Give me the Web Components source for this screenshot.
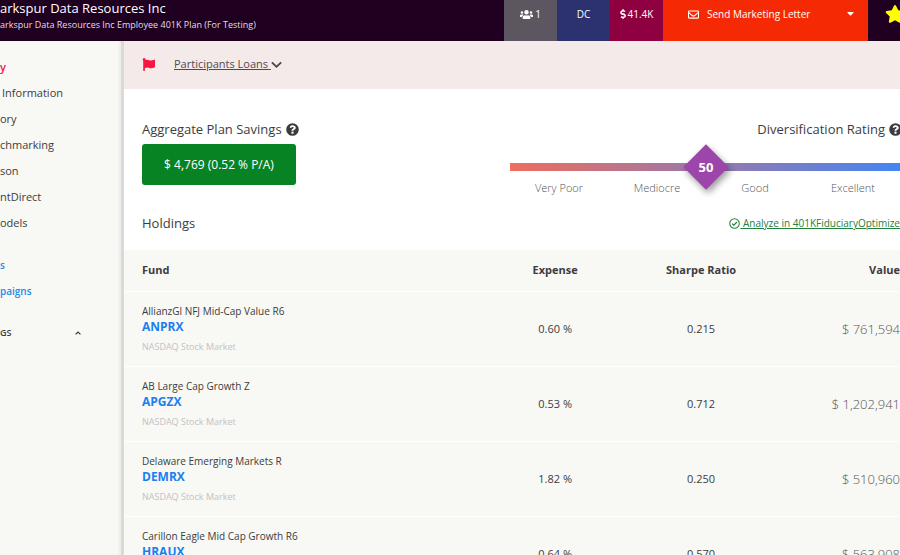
<!DOCTYPE html>
<html lang="en">
<head>
<meta charset="utf-8">
<title>401K Plan Holdings</title>
<style>
html, body { margin: 0; height: 100%; }
body { font-family: "Open Sans", "Noto Sans", sans-serif; font-size: 11px; line-height: 16px; color: #3c3c40; background: #fff; overflow: hidden; }
</style>
</head>
<body>
<plan-app>
  <plan-header slot="header" heading="arkspur Data Resources Inc" subheading="arkspur Data Resources Inc Employee 401K Plan (For Testing)">
    <header-tile tone="people" icon="users">1</header-tile>
    <header-tile tone="type">DC</header-tile>
    <header-tile tone="assets" icon="dollar">41.4K</header-tile>
    <letter-button>Send Marketing Letter</letter-button>
    <favorite-button></favorite-button>
  </plan-header>
  <side-nav slot="nav"></side-nav>
  <plan-alert>Participants Loans</plan-alert>
  <plan-summary>
    <savings-box slot="savings">$ 4,769 (0.52 % P/A)</savings-box>
    <rating-scale slot="rating" value="50"></rating-scale>
  </plan-summary>
  <holdings-bar></holdings-bar>
  <holdings-table></holdings-table>
</plan-app>
<script>
const ICONS = {
  users: ['0 0 640 512', '<path d="M96 224a64 64 0 1 0 0-128 64 64 0 0 0 0 128zm448 0a64 64 0 1 0 0-128 64 64 0 0 0 0 128zm32 32h-64c-18 0-34 7-45 19 40 22 69 62 75 109h66c18 0 32-14 32-32v-32c0-35-29-64-64-64zm-256 0a112 112 0 1 0 0-224 112 112 0 0 0 0 224zm77 32h-8c-42 20-96 20-138 0h-8c-64 0-115 52-115 115v29c0 27 21 48 48 48h288c27 0 48-21 48-48v-29c0-63-51-115-115-115zm-224-13c-11-12-27-19-45-19H64c-35 0-64 29-64 64v32c0 18 14 32 32 32h66c6-47 35-87 75-109z"/>'],
  dollar: ['0 0 288 512', '<path d="M209 233l-108-31c-13-4-21-15-21-28 0-16 13-30 29-30h67c12 0 24 4 34 11 6 4 14 4 20-2l35-34c7-7 6-19-2-25-24-19-54-30-85-30V16c0-9-7-16-16-16h-32c-9 0-16 7-16 16v48h-2C49 64-7 124 1 193c6 49 43 89 91 103l102 30c13 4 21 15 21 28 0 16-13 30-29 30h-67c-12 0-24-4-34-11-6-4-14-4-20 2l-35 34c-7 7-6 19 2 25 24 19 54 30 85 30v32c0 9 7 16 16 16h32c9 0 16-7 16-16v-32c47-1 90-29 105-74 22-62-15-139-77-157z"/>'],
  mail: ['0 0 512 512', '<path fill-rule="evenodd" d="M48 64h416a48 48 0 0 1 48 48v288a48 48 0 0 1-48 48H48a48 48 0 0 1-48-48V112a48 48 0 0 1 48-48zm0 48v41c23 18 58 47 135 107 17 13 51 46 73 45 22 1 56-32 73-45 77-60 112-89 135-107v-41H48zm0 288h416V214c-23 18-56 44-105 83-22 17-60 56-103 55-43 1-82-38-103-55-49-39-82-65-105-83v186z"/>'],
  caretDown: ['0 0 320 192', '<path d="M31 0h258c18 0 27 21 14 34L177 163a24 24 0 0 1-34 0L17 34C4 21 13 0 31 0z"/>'],
  caretUp: ['0 0 320 192', '<path d="M30 170L160 45l130 125" fill="none" stroke="currentColor" stroke-width="70"/>'],
  star: ['0 0 576 512', '<path d="M259 18l-65 132-146 21c-26 4-36 36-17 55l105 103-25 145c-4 26 24 46 47 34l130-69 130 69c23 12 51-8 47-34l-25-145 105-103c19-19 9-51-17-55l-146-21-65-132c-12-24-46-24-58 0z"/>'],
  flag: ['0 0 512 512', '<path d="M350 99c-49 0-89-32-151-32-23 0-43 4-62 11A56 56 0 1 0 48 101v387c0 13 11 24 24 24h16c13 0 24-11 24-24v-94c28-12 64-22 114-22 49 0 89 32 151 32 48 0 86-16 121-40 9-6 14-16 14-27V96c0-23-24-39-46-29-34 16-77 32-116 32z"/>'],
  chevron: ['0 0 448 280', '<path d="M34 52l190 180L414 52" fill="none" stroke="currentColor" stroke-width="76"/>'],
  help: ['0 0 512 512', '<path fill-rule="evenodd" d="M504 256a248 248 0 1 1-496 0 248 248 0 0 1 496 0zM262 90c-54 0-89 23-116 64-4 5-2 12 2 16l35 26c5 4 13 3 17-2 18-23 30-36 57-36 20 0 45 13 45 33 0 15-12 22-32 33-24 14-55 30-55 72v12h84v-8c0-29 86-30 86-109 0-59-61-101-123-101zm-6 246a46 46 0 1 0 0 92 46 46 0 0 0 0-92z"/>'],
  check: ['0 0 512 512', '<circle cx="256" cy="256" r="222" fill="none" stroke="currentColor" stroke-width="48"/><path d="M145 260l76 78 150-152" fill="none" stroke="currentColor" stroke-width="52"/>']
};
const icon = (name, w, h) => `<svg aria-hidden="true" width="${w}" height="${h}" viewBox="${ICONS[name][0]}" fill="currentColor">${ICONS[name][1]}</svg>`;
const BASE = '*,:host{box-sizing:border-box} svg{display:block;flex:none} a{color:inherit} button{font:inherit;color:inherit;background:none;border:0;padding:0;cursor:pointer}';

function define(name, css, html) {
  customElements.define(name, class extends HTMLElement {
    constructor() {
      super();
      const t = document.createElement('template');
      t.innerHTML = `<style>${BASE}${css}</style>${typeof html === 'function' ? html(this) : html}`;
      this.attachShadow({ mode: 'open' }).append(t.content.cloneNode(true));
    }
  });
}

define('plan-app',
  `:host{display:grid;grid-template:41px minmax(0,1fr)/124px minmax(0,1fr);height:100vh;overflow:hidden}
   slot[name=header]{display:block;grid-column:1/3}
   main{margin-right:-20px;min-width:0;overflow:hidden}`,
  `<slot name="header"></slot><slot name="nav"></slot><main><slot></slot></main>`);

define('plan-header',
  `:host{display:block;height:100%}
   header{display:flex;height:100%;background:#1f0020;color:#fff;overflow:hidden}
   .names{flex:1;white-space:nowrap}
   h1{margin:0;font-size:13px;line-height:16px;font-weight:400}
   p{margin:0;font-size:9px;line-height:18px;color:#e4dce4}`,
  el => `<header><div class="names"><h1>${el.getAttribute('heading')}</h1><p>${el.getAttribute('subheading')}</p></div><slot></slot></header>`);

define('header-tile',
  `:host{display:flex;flex:none;justify-content:center;align-items:flex-start;width:53px;padding-top:6px;font-size:10px;line-height:16px;background:#5b5660}
   :host([tone=type]){background:#2c3170}
   :host([tone=assets]){background:#8f0040}
   div{display:flex;align-items:center;gap:2px}`,
  el => `<div>${el.getAttribute('icon') === 'users' ? icon('users', 13, 11) : el.getAttribute('icon') === 'dollar' ? icon('dollar', 6, 10) : ''}<span><slot></slot></span></div>`);

define('letter-button',
  `:host{display:flex;flex:none;width:205px;background:#f52a05;font-size:10px;line-height:16px;align-items:flex-start}
   .send{flex:1;display:flex;align-items:center;gap:8px;padding:6px 0 0 25px}
   .more{width:36px;height:28px;display:flex;align-items:center;justify-content:center}`,
  `<button class="send">${icon('mail', 11, 11)}<span><slot></slot></span></button><button class="more" aria-label="More letters">${icon('caretDown', 7, 4)}</button>`);

define('favorite-button',
  `:host{display:flex;flex:none;width:32px;padding:5px 0 0 17px;align-items:flex-start;color:#ff0}`,
  `<button aria-label="Favorite">${icon('star', 20, 18)}</button>`);

define('side-nav',
  `:host{display:block;background:#f8f8f4;border-right:3px solid #dadad7;box-shadow:inset -2px 0 2px #ececea;overflow:hidden;white-space:nowrap;font-size:11px;font-weight:500}
   nav{padding-top:13px;display:flex;flex-direction:column}
   a{display:block;line-height:26px;height:26px;text-decoration:none}
   .on{color:#f5124d;font-weight:600}
   .indent{padding-left:2px}
   .links{padding-top:16px;color:#2588e8;font-weight:600;font-size:10px}
   .group{display:flex;justify-content:space-between;align-items:center;width:100%;margin-top:16px;padding:0 40px 0 0;height:26px;font-size:9px;font-weight:600}`,
  `<nav><a class="on" href="#">y</a><a class="indent" href="#">Information</a><a href="#">ory</a><a href="#">chmarking</a><a href="#">son</a><a href="#">ntDirect</a><a href="#">odels</a>
   <div class="links"><a href="#">s</a><a href="#">paigns</a></div>
   <button class="group"><span>GS</span>${icon('caretUp', 6, 4)}</button></nav>`);

define('plan-alert',
  `:host{display:flex;align-items:center;height:48px;padding:0 18px 2px;background:#f5eaea;font-size:11px;color:#504a4e}
   .flag{color:#fa1440;margin-right:19px}
   a{display:flex;align-items:center;text-decoration:none}
   span{text-decoration:underline;white-space:pre}`,
  `<div class="flag">${icon('flag', 13, 13)}</div><a href="#"><span><slot></slot> </span>${icon('chevron', 11, 7)}</a>`);

define('plan-summary',
  `:host{display:flex;justify-content:space-between;align-items:flex-start;padding:31px 18px 0}`,
  `<slot name="savings"></slot><slot name="rating"></slot>`);

const HEAD = `h2{display:flex;align-items:center;gap:4px;margin:0;font-size:13px;line-height:18px;font-weight:500}`;

define('savings-box',
  `:host{display:block} ${HEAD}
   .box{display:flex;align-items:center;justify-content:center;width:154px;height:41px;margin-top:6px;border-radius:3px;background:#078323;color:#fff;font-size:12px}`,
  `<h2>Aggregate Plan Savings ${icon('help', 13, 13)}</h2><div class="box"><span><slot></slot></span></div>`);

define('rating-scale',
  `:host{display:block;flex:0 1 392px} ${HEAD} h2{justify-content:flex-end}
   .bar{position:relative;height:8px;margin-top:25px;background:linear-gradient(90deg,#ee6d5e,#4485f4)}
   .mark{position:absolute;left:50%;top:50%;width:32px;height:32px;margin:-16px;background:#9c46ab;transform:rotate(45deg);box-shadow:4px 1px 7px rgba(0,0,0,.4)}
   .num{position:absolute;left:50%;top:50%;width:32px;height:32px;margin:-16px;line-height:32px;text-align:center;color:#fff;font-size:13px;font-weight:700}
   .ticks{display:grid;grid-template-columns:repeat(4,1fr);margin-top:9px;text-align:center;font-size:11px;font-weight:300;color:#555}`,
  el => `<h2>Diversification Rating ${icon('help', 13, 13)}</h2><div class="bar"><div class="mark"></div><div class="num">${el.getAttribute('value')}</div></div>
   <div class="ticks"><span>Very Poor</span><span>Mediocre</span><span>Good</span><span>Excellent</span></div>`);

define('holdings-bar',
  `:host{display:flex;justify-content:space-between;align-items:center;padding:18px 20px 18px 18px} ${HEAD}
   a{display:flex;align-items:center;color:#23803c;font-size:10px;text-decoration:none}
   span{text-decoration:underline;white-space:pre}`,
  `<h2>Holdings</h2><a href="#">${icon('check', 11, 11)}<span> Analyze in 401KFiduciaryOptimize</span></a>`);

const FUNDS = [
  ['AllianzGl NFJ Mid-Cap Value R6', 'ANPRX', '0.60 %', '0.215', '$ 761,594'],
  ['AB Large Cap Growth Z', 'APGZX', '0.53 %', '0.712', '$ 1,202,941'],
  ['Delaware Emerging Markets R', 'DEMRX', '1.82 %', '0.250', '$ 510,960'],
  ['Carillon Eagle Mid Cap Growth R6', 'HRAUX', '0.64 %', '0.570', '$ 563,908']
];
define('holdings-table',
  `:host{display:block}
   table{width:100%;table-layout:fixed;border-collapse:collapse;background:#f8f8f4}
   col.f{width:45%}
   th{height:41px;padding:0;font-size:11px;font-weight:700}
   td{height:75px;padding:0;font-size:11px;text-align:center;vertical-align:middle}
   tr{border-bottom:1px solid #fff}
   th:first-child,td:first-child{text-align:left;padding-left:18px}
   th:last-child,td:last-child{text-align:right;padding-right:20px}
   td:last-child{font-size:13px;font-weight:300;color:#555}
   .name{font-size:10px;line-height:16px}
   a{display:block;font-size:12px;line-height:16px;font-weight:700;color:#1a7ff0;text-decoration:none}
   .ex{margin-top:4px;font-size:9px;line-height:16px;color:#c4c2c2}`,
  `<table><colgroup><col class="f"><col><col><col></colgroup>
   <thead><tr><th scope="col">Fund</th><th scope="col">Expense</th><th scope="col">Sharpe Ratio</th><th scope="col">Value</th></tr></thead>
   <tbody>${FUNDS.map(([n, s, e, r, v]) => `<tr><td><div class="name">${n}</div><a href="#">${s}</a><div class="ex">NASDAQ Stock Market</div></td><td>${e}</td><td>${r}</td><td>${v}</td></tr>`).join('')}</tbody></table>`);
</script>
</body>
</html>
